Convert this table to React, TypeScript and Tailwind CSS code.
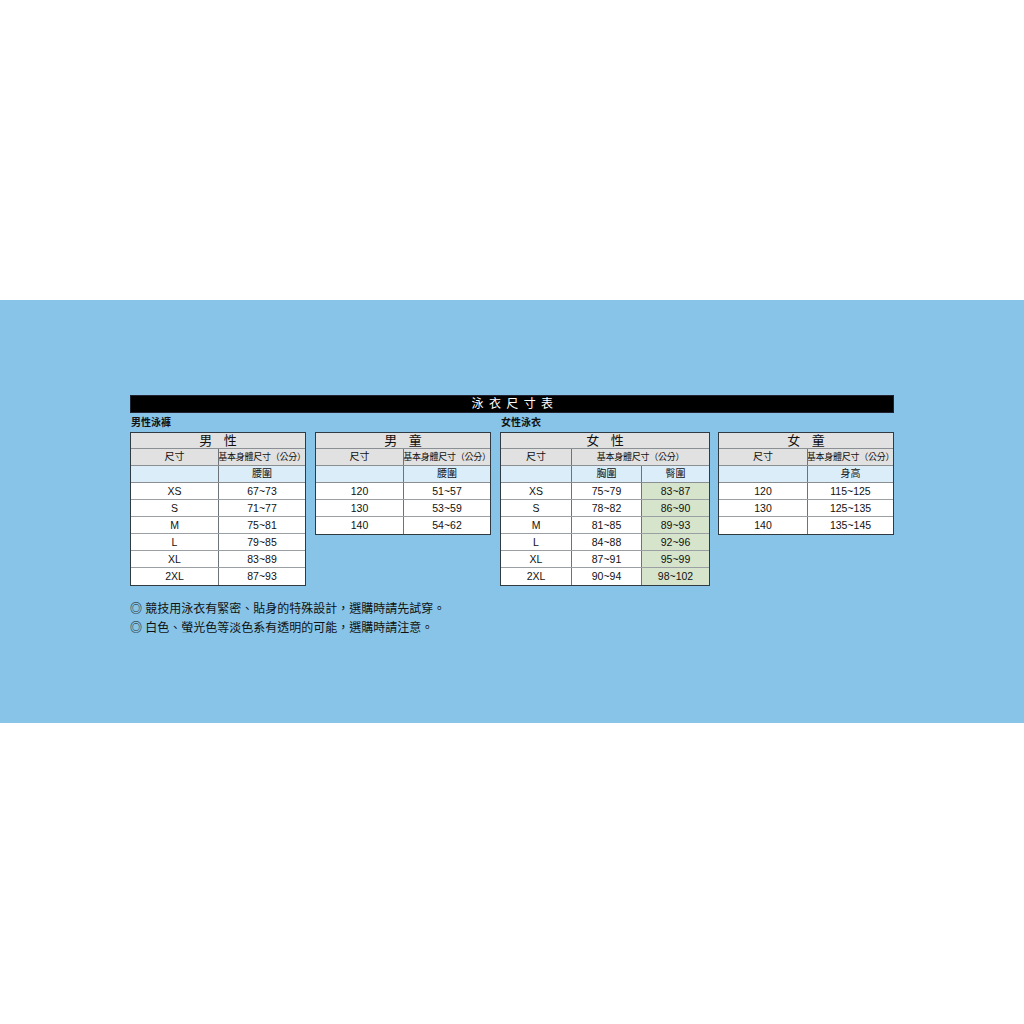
const font = { fontFamily: '"Liberation Sans", "Noto Sans CJK TC", sans-serif' };

type Table = {
  title: string;
  cols: number[];
  sub: string[];
  rows: string[][];
  green?: boolean;
};

const tables: Table[] = [
  {
    title: '男 性',
    cols: [88, 88],
    sub: ['腰圍'],
    rows: [
      ['XS', '67~73'],
      ['S', '71~77'],
      ['M', '75~81'],
      ['L', '79~85'],
      ['XL', '83~89'],
      ['2XL', '87~93'],
    ],
  },
  {
    title: '男 童',
    cols: [88, 88],
    sub: ['腰圍'],
    rows: [
      ['120', '51~57'],
      ['130', '53~59'],
      ['140', '54~62'],
    ],
  },
  {
    title: '女 性',
    cols: [71, 70, 69],
    sub: ['胸圍', '臀圍'],
    green: true,
    rows: [
      ['XS', '75~79', '83~87'],
      ['S', '78~82', '86~90'],
      ['M', '81~85', '89~93'],
      ['L', '84~88', '92~96'],
      ['XL', '87~91', '95~99'],
      ['2XL', '90~94', '98~102'],
    ],
  },
  {
    title: '女 童',
    cols: [89, 87],
    sub: ['身高'],
    rows: [
      ['120', '115~125'],
      ['130', '125~135'],
      ['140', '135~145'],
    ],
  },
];

function SizeTable({ t }: { t: Table }) {
  const width = t.cols.reduce((a, b) => a + b, 0);
  return (
    <div className="border border-[#2f3a42] bg-white shrink-0" style={{ width }}>
      <div className="h-[16px] bg-[#e1e1e1] border-b border-[#8a8f93] flex items-center justify-center text-[13px] leading-none tracking-[0.3em] pl-[4px] text-[#111]">
        {t.title}
      </div>
      <div className="h-[17px] bg-[#e1e1e1] border-b border-[#8a8f93] flex text-[10px] leading-none text-[#111]">
        <div className="shrink-0 flex items-center justify-center border-r border-[#6d7378]" style={{ width: t.cols[0] }}>
          尺寸
        </div>
        <div className="flex-1 min-w-0 overflow-hidden flex items-center justify-center text-[9px] tracking-[-0.03em] whitespace-nowrap">
          基本身體尺寸（公分）
        </div>
      </div>
      <div className="h-[17px] bg-[#dcedfa] border-b border-[#8a8f93] flex text-[10px] leading-none text-[#111]">
        <div className="shrink-0 border-r border-[#6d7378]" style={{ width: t.cols[0] }} />
        {t.sub.map((s, i) => (
          <div
            key={s}
            className={`shrink-0 flex items-center justify-center ${i < t.sub.length - 1 ? 'border-r border-[#6d7378]' : ''}`}
            style={{ width: t.cols[i + 1] - (i === t.sub.length - 1 ? 2 : 0) }}
          >
            {s}
          </div>
        ))}
      </div>
      {t.rows.map((r, ri) => (
        <div
          key={ri}
          className={`h-[17px] flex text-[10.5px] leading-none text-[#111] ${ri < t.rows.length - 1 ? 'border-b border-[#9a9fa3]' : ''}`}
        >
          {r.map((c, ci) => (
            <div
              key={ci}
              className={`shrink-0 flex items-center justify-center ${ci < r.length - 1 ? 'border-r border-[#6d7378]' : ''} ${t.green && ci === 2 ? 'bg-[#d6e4cb]' : ''}`}
              style={{ width: t.cols[ci] - (ci === r.length - 1 ? 2 : 0) }}
            >
              {c}
            </div>
          ))}
        </div>
      ))}
    </div>
  );
}

export default function App() {
  return (
    <div className="w-[1024px] h-[1024px] bg-white flex flex-col" style={font}>
      <div className="h-[300px]" />
      <div className="h-[423px] bg-[#87c4e7] pt-[95px]">
        <div className="w-[764px] mx-auto">
          <div className="h-[18px] bg-black border border-[#223] flex items-center justify-center text-white text-[12px] leading-none tracking-[0.45em] pl-[6px]">
            泳衣尺寸表
          </div>
          <div className="flex h-[19px] items-center text-[10px] font-bold text-[#111]">
            <div className="w-[370px] pl-[1px]">男性泳褲</div>
            <div className="pl-[1px]">女性泳衣</div>
          </div>
          <div className="flex items-start">
            <SizeTable t={tables[0]} />
            <div className="w-[9px]" />
            <SizeTable t={tables[1]} />
            <div className="w-[9px]" />
            <SizeTable t={tables[2]} />
            <div className="w-[8px]" />
            <SizeTable t={tables[3]} />
          </div>
          <div className="mt-[14px] text-[12px] leading-[19px] text-[#111]">
            <div>◎ 競技用泳衣有緊密、貼身的特殊設計，選購時請先試穿。</div>
            <div>◎ 白色、螢光色等淡色系有透明的可能，選購時請注意。</div>
          </div>
        </div>
      </div>
    </div>
  );
}
